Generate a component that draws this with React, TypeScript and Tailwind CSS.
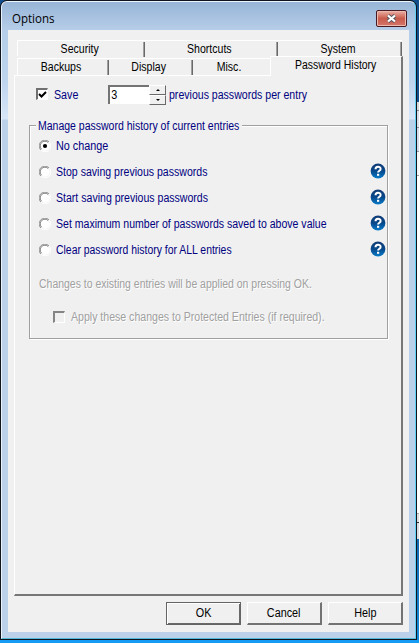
import type { ReactNode } from "react";

function Label({ children, className = "" }: { children: ReactNode; className?: string }) {
  return (
    <span className={`inline-block whitespace-nowrap text-[12px] leading-[14px] ${className}`}>
      {children}
    </span>
  );
}

function Tab({ label, size, last = false }: { label: string; size: string; last?: boolean }) {
  return (
    <div className={`flex h-full shrink-0 justify-center border-t border-white ${size}`}>
      <div className={`flex flex-1 justify-center pt-px ${last ? "pr-[5px]" : "pr-[2px]"}`}>
        <Label className="scale-x-[.88]">{label}</Label>
      </div>
      {!last && <div className="mt-px h-[15px] w-[2px] border-l border-[#a0a0a0] bg-[#696969]" />}
    </div>
  );
}

function HelpIcon() {
  return (
    <svg className="mb-[2px] h-[16px] w-[16px] shrink-0" viewBox="0 0 16 16">
      <defs>
        <linearGradient id="help" x1="0" y1="0" x2="0" y2="1">
          <stop offset="0" stopColor="#123c75" />
          <stop offset=".5" stopColor="#07488a" />
          <stop offset="1" stopColor="#087bc8" />
        </linearGradient>
      </defs>
      <circle cx="8" cy="8" r="7.4" fill="url(#help)" />
      <path d="M5.5 6.2C5.5 2.9 10.6 3 10.6 5.9C10.6 7.8 8.1 7.6 8.1 9.6" fill="none" stroke="#fff" strokeWidth="2" />
      <rect x="7" y="10.8" width="2.2" height="2" fill="#fff" />
    </svg>
  );
}

function Radio({ checked }: { checked: boolean }) {
  return (
    <svg className="h-[12px] w-[12px] shrink-0" viewBox="0 0 12 12">
      <circle cx="6" cy="6" r="4.8" fill="#fff" />
      <path d="M1.8 10A5.4 5.4 0 0 1 10 1.8" fill="none" stroke="#959595" />
      <path d="M2.6 9.2A4.5 4.5 0 0 1 9.2 2.6" fill="none" stroke="#666" strokeWidth=".8" />
      <path d="M10.2 2A5.4 5.4 0 0 1 2 10.2" fill="none" stroke="#fff" />
      {checked && <circle cx="6" cy="6" r="2.1" fill="#000" />}
    </svg>
  );
}

function Option({ label, scale, checked = false, help = true }: { label: string; scale: string; checked?: boolean; help?: boolean }) {
  return (
    <div className="flex h-[26px] items-center">
      <Radio checked={checked} />
      <Label className={`ml-[5px] origin-left text-[#000080] ${scale}`}>{label}</Label>
      <div className="flex-1" />
      {help && <HelpIcon />}
    </div>
  );
}

function Button({ label, primary = false }: { label: string; primary?: boolean }) {
  return (
    <button
      className={`flex h-[23px] w-[75px] items-center justify-center ${
        primary
          ? "border border-[#646464] pb-[2px] shadow-[inset_1px_1px_#fff,inset_-1px_-1px_#696969]"
          : "border-t border-r-2 border-b-2 border-l border-t-white border-r-[#737373] border-b-[#737373] border-l-white"
      }`}
    >
      <Label className="scale-x-[.9]">{label}</Label>
    </button>
  );
}

export default function App() {
  return (
    <div className="flex h-[643px] w-[419px] flex-col overflow-hidden bg-[#169bf5] font-['Liberation_Sans',Arial,sans-serif] text-black">
      <div className="flex h-[640px] bg-[#124e8d]">
        <div className="flex w-[417px] shrink-0 flex-col rounded-t-[7px] border border-[#10151d] bg-[#10151d]">
          <div className="flex flex-1 flex-col rounded-t-[6px] border border-t-[#edf5fc] border-r-[#60d0f5] border-b-[#50bad8] border-l-[#eaf3fb] bg-[linear-gradient(to_bottom,#98b5d7_0px,#b5cde8_28px,#bfd5ee_80px,#d8e6f8_117px,#bad1e9_118px,#bad1e9_100%)] px-[6px] pb-[6px]">
            <header className="flex h-[28px] shrink-0 items-start justify-between pl-[4px]">
              <span className="mt-[8px] origin-left scale-x-[.96] font-['Open_Sans','Noto_Sans',sans-serif] text-[12px] leading-[18px]">Options</span>
              <button className="mt-[8px] mr-[2px] flex h-[17px] w-[31px] items-center justify-center rounded-[2px] border border-[#471922] bg-linear-to-b from-[#e9afa5] via-[#c85b4b] via-50% to-[#d4766a] shadow-[inset_0_0_0_1px_#edb8ae]">
                <svg className="h-[11px] w-[13px]" viewBox="0 0 13 11">
                  <path d="M3 2.5L10 8.5M10 2.5L3 8.5" stroke="#53545d" strokeWidth="4" />
                  <path d="M3 2.5L10 8.5M10 2.5L3 8.5" stroke="#fff" strokeWidth="2.3" />
                </svg>
              </button>
            </header>
            <main className="flex flex-1 flex-col bg-[#f0f0f0] pt-[10px] pr-[6px] pb-[7px] pl-[6px]">
              <div className="ml-[3px] flex h-[16px] shrink-0 border-l border-white">
                <Tab label="Security" size="w-[127px]" />
                <Tab label="Shortcuts" size="w-[133px]" />
                <Tab label="System" size="w-[124px]" />
              </div>
              <div className="flex h-[19px] shrink-0">
                <div className="ml-[3px] mt-[2px] flex h-[17px] border-l border-white">
                  <Tab label="Backups" size="w-[91px]" />
                  <Tab label="Display" size="w-[84px]" />
                  <Tab label="Misc." size="w-[77px]" last />
                </div>
                <div className="flex flex-1 justify-center border-t border-r-2 border-l border-t-white border-r-[#777] border-l-white pt-[1px]">
                  <Label className="scale-x-[.87]">Password History</Label>
                </div>
              </div>
              <section className="relative flex h-[521px] shrink-0 flex-col border-r-2 border-b-2 border-l border-r-[#777] border-b-[#777] border-l-white pr-[13px] pl-[14px]">
                <div className="absolute top-0 left-0 h-px w-[256px] bg-white" />
                <div className="flex h-[50px] items-start pt-[10px] pl-[7px]">
                  <div className="mt-[3px] flex h-[12px] w-[12px] items-center justify-center border-t-2 border-l-2 border-r border-b border-t-[#707070] border-l-[#707070] border-r-white border-b-white bg-white">
                    <svg className="h-[9px] w-[9px]" viewBox="0 0 9 9"><path d="M1 4L3.5 6.5L8 2" fill="none" stroke="#000" strokeWidth="2" /></svg>
                  </div>
                  <Label className="mt-[3px] ml-[6px] w-[28px] origin-left scale-x-[.89] text-[#000080]">Save</Label>
                  <div className="ml-[26px] flex h-[19px] w-[41px] items-center border-t-2 border-l-2 border-t-[#747474] border-l-[#747474] bg-white pb-[2px] pl-[1px]">
                    <Label className="scale-x-90">3</Label>
                  </div>
                  <div className="flex h-[20px] w-[17px] flex-col">
                    {[false, true].map((down) => (
                      <div key={String(down)} className="flex flex-1 items-center justify-center border border-t-white border-r-[#696969] border-b-[#696969] border-l-white bg-[#f0f0f0]">
                        <svg className="h-[2px] w-[4px]" viewBox="0 0 4 2"><path d={down ? "M0 0H4L2 2Z" : "M0 2L2 0L4 2Z"} /></svg>
                      </div>
                    ))}
                  </div>
                  <Label className="mt-[3px] ml-[3px] origin-left scale-x-[.88] text-[#000080]">previous passwords per entry</Label>
                </div>
                <div className="relative h-[214px] border border-[#a0a0a0] pt-[7px] pr-px pl-[9px] shadow-[1px_1px_#fff,inset_1px_1px_#fff]">
                  <div className="absolute top-[-7px] left-[6px] flex h-[15px] w-[206px] bg-[#f0f0f0] pl-[2px]">
                    <Label className="origin-left scale-x-[.875] text-[#000080]">Manage password history of current entries</Label>
                  </div>
                  <Option label="No change" scale="scale-x-[.9]" checked help={false} />
                  <Option label="Stop saving previous passwords" scale="scale-x-[.88]" />
                  <Option label="Start saving previous passwords" scale="scale-x-[.88]" />
                  <Option label="Set maximum number of passwords saved to above value" scale="scale-x-[.878]" />
                  <Option label="Clear password history for ALL entries" scale="scale-x-[.868]" />
                  <div className="mt-[14px] flex h-[14px]">
                    <Label className="origin-left scale-x-[.872] text-[#a0a0a0] [text-shadow:1px_1px_#fff]">Changes to existing entries will be applied on pressing OK.</Label>
                  </div>
                  <div className="mt-[19px] ml-[14px] flex h-[14px] items-center">
                    <div className="mb-px h-[12px] w-[12px] border-t-2 border-l-2 border-r border-b border-t-[#858585] border-l-[#858585] border-r-white border-b-white" />
                    <Label className="ml-[6px] origin-left scale-x-[.88] text-[#a0a0a0] [text-shadow:1px_1px_#fff]">Apply these changes to Protected Entries (if required).</Label>
                  </div>
                </div>
              </section>
              <footer className="mt-[6px] flex justify-end gap-[6px]">
                <Button label="OK" primary />
                <Button label="Cancel" />
                <Button label="Help" />
              </footer>
            </main>
          </div>
        </div>
        <div className="flex w-[2px] flex-col">
          <div className="h-[102px] bg-[#124e8d]" />
          <div className="h-[9px] border-b border-[#808691] bg-[#d8d8d8]" />
          <div className="h-[17px] border-b border-[#8c939d] bg-[#d7dde9]" />
          <div className="h-[24px] border-b border-[#90969e] bg-[#d4dceb]" />
          <div className="h-[24px] border-b border-[#a0a5ab] bg-[#f4f5f7]" />
          <div className="h-[337px] bg-white" />
          <div className="h-[10px] border-t border-b border-t-[#aaa] border-b-[#333] bg-[#ddd]" />
          <div className="h-[16px] bg-[#d8dce1]" />
          <div className="flex-1 bg-linear-to-b from-[#1167b0] to-[#1689db]" />
        </div>
      </div>
    </div>
  );
}
